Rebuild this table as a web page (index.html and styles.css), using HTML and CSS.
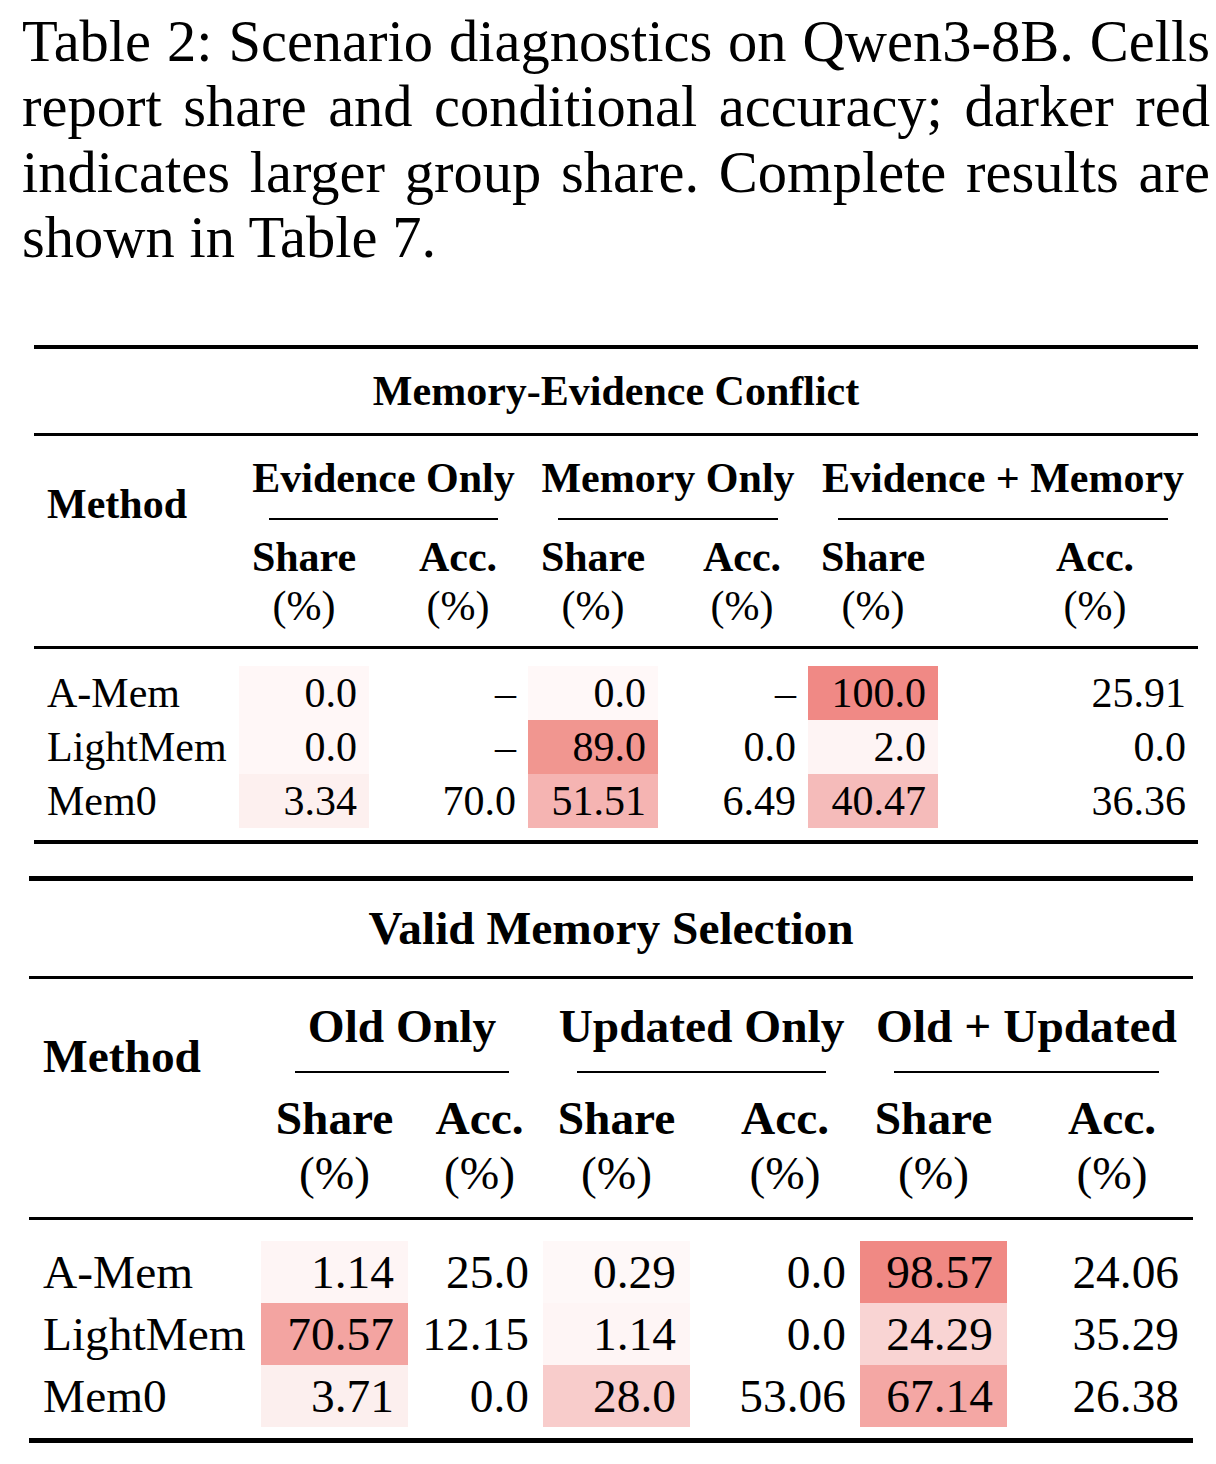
FILE: index.html
```html
<!DOCTYPE html>
<html lang="en">
<head>
<meta charset="utf-8">
<title>Table 2: Scenario diagnostics on Qwen3-8B</title>
<link rel="stylesheet" href="styles.css">
</head>
<body>
<main class="page">
  <p class="caption">
    <span class="cap-line">Table 2: Scenario diagnostics on Qwen3-8B. Cells</span>
    <span class="cap-line">report share and conditional accuracy; darker red</span>
    <span class="cap-line">indicates larger group share. Complete results are</span>
    <span class="cap-line last">shown in Table 7.</span>
  </p>

  <table class="t t1">
    <colgroup>
      <col class="w-method"><col class="w-share"><col class="w-acc1"><col class="w-share"><col class="w-acc2"><col class="w-share"><col class="w-acc3">
    </colgroup>
    <thead>
      <tr><th colspan="7" class="title">Memory-Evidence Conflict</th></tr>
      <tr>
        <th rowspan="2" class="method">Method</th>
        <th colspan="2" class="grp"><div class="grp-label">Evidence Only</div><div class="cmid"></div></th>
        <th colspan="2" class="grp"><div class="grp-label">Memory Only</div><div class="cmid"></div></th>
        <th colspan="2" class="grp"><div class="grp-label">Evidence + Memory</div><div class="cmid"></div></th>
      </tr>
      <tr>
        <th class="sub"><span class="sub-in"><b>Share</b><span class="pct">(%)</span></span></th>
        <th class="sub a1"><span class="sub-in"><b>Acc.</b><span class="pct">(%)</span></span></th>
        <th class="sub"><span class="sub-in"><b>Share</b><span class="pct">(%)</span></span></th>
        <th class="sub a2"><span class="sub-in"><b>Acc.</b><span class="pct">(%)</span></span></th>
        <th class="sub"><span class="sub-in"><b>Share</b><span class="pct">(%)</span></span></th>
        <th class="sub a3"><span class="sub-in"><b>Acc.</b><span class="pct">(%)</span></span></th>
      </tr>
    </thead>
    <tbody>
      <tr class="gap-top"><td colspan="7"></td></tr>
      <tr class="row">
        <td class="name">A-Mem</td>
        <td class="num" style="background:#FFF7F7">0.0</td>
        <td class="num">–</td>
        <td class="num" style="background:#FFF8F8">0.0</td>
        <td class="num">–</td>
        <td class="num" style="background:#F08985">100.0</td>
        <td class="num">25.91</td>
      </tr>
      <tr class="row">
        <td class="name">LightMem</td>
        <td class="num" style="background:#FFF7F7">0.0</td>
        <td class="num">–</td>
        <td class="num" style="background:#F19690">89.0</td>
        <td class="num">0.0</td>
        <td class="num" style="background:#FEF4F4">2.0</td>
        <td class="num">0.0</td>
      </tr>
      <tr class="row">
        <td class="name">Mem0</td>
        <td class="num" style="background:#FDF0EF">3.34</td>
        <td class="num">70.0</td>
        <td class="num" style="background:#F5B4B2">51.51</td>
        <td class="num">6.49</td>
        <td class="num" style="background:#F5BBBA">40.47</td>
        <td class="num">36.36</td>
      </tr>
      <tr class="gap-bot"><td colspan="7"></td></tr>
    </tbody>
  </table>

  <table class="t t2">
    <colgroup>
      <col class="w-method"><col class="w-share"><col class="w-acc1"><col class="w-share"><col class="w-acc2"><col class="w-share"><col class="w-acc3">
    </colgroup>
    <thead>
      <tr><th colspan="7" class="title">Valid Memory Selection</th></tr>
      <tr>
        <th rowspan="2" class="method">Method</th>
        <th colspan="2" class="grp"><div class="grp-label">Old Only</div><div class="cmid"></div></th>
        <th colspan="2" class="grp"><div class="grp-label">Updated Only</div><div class="cmid"></div></th>
        <th colspan="2" class="grp"><div class="grp-label">Old + Updated</div><div class="cmid"></div></th>
      </tr>
      <tr>
        <th class="sub"><span class="sub-in"><b>Share</b><span class="pct">(%)</span></span></th>
        <th class="sub a1"><span class="sub-in"><b>Acc.</b><span class="pct">(%)</span></span></th>
        <th class="sub"><span class="sub-in"><b>Share</b><span class="pct">(%)</span></span></th>
        <th class="sub a2"><span class="sub-in"><b>Acc.</b><span class="pct">(%)</span></span></th>
        <th class="sub"><span class="sub-in"><b>Share</b><span class="pct">(%)</span></span></th>
        <th class="sub a3"><span class="sub-in"><b>Acc.</b><span class="pct">(%)</span></span></th>
      </tr>
    </thead>
    <tbody>
      <tr class="gap-top"><td colspan="7"></td></tr>
      <tr class="row">
        <td class="name">A-Mem</td>
        <td class="num" style="background:#FEF5F5">1.14</td>
        <td class="num">25.0</td>
        <td class="num" style="background:#FEF8F8">0.29</td>
        <td class="num">0.0</td>
        <td class="num" style="background:#F08984">98.57</td>
        <td class="num">24.06</td>
      </tr>
      <tr class="row">
        <td class="name">LightMem</td>
        <td class="num" style="background:#F3A4A1">70.57</td>
        <td class="num">12.15</td>
        <td class="num" style="background:#FEF5F5">1.14</td>
        <td class="num">0.0</td>
        <td class="num" style="background:#F9D4D3">24.29</td>
        <td class="num">35.29</td>
      </tr>
      <tr class="row">
        <td class="name">Mem0</td>
        <td class="num" style="background:#FCEFEE">3.71</td>
        <td class="num">0.0</td>
        <td class="num" style="background:#F8CCCB">28.0</td>
        <td class="num">53.06</td>
        <td class="num" style="background:#F4A7A4">67.14</td>
        <td class="num">26.38</td>
      </tr>
      <tr class="gap-bot"><td colspan="7"></td></tr>
    </tbody>
  </table>
</main>
</body>
</html>
```

FILE: styles.css
```css
html, body {
  margin: 0;
  padding: 0;
  background: #ffffff;
  color: #000000;
  font-family: "Liberation Serif", "Times New Roman", serif;
}

.page {
  width: 1188px;
  padding: 9px 0 0 22px;
}

/* Caption */
.caption {
  margin: 0;
  font-size: 58.5px;
  line-height: 65.3px;
}
.cap-line {
  display: block;
  white-space: nowrap;
  text-align: justify;
  text-align-last: justify;
}
.cap-line.last {
  text-align: left;
  text-align-last: left;
}

/* Tables (shared) */
.t {
  border-collapse: separate;
  border-spacing: 0;
  table-layout: fixed;
  width: 1164px;
}
.t th, .t td {
  padding: 0;
  font-weight: normal;
}
.t .title {
  font-weight: bold;
  text-align: center;
  white-space: nowrap;
}
.t .method {
  font-weight: bold;
  text-align: left;
  vertical-align: top;
}
.t .grp {
  font-weight: bold;
  text-align: center;
  vertical-align: top;
  white-space: nowrap;
}
.t .cmid {
  background: #000;
  height: 2px;
}
.t .sub {
  text-align: center;
  vertical-align: top;
  white-space: nowrap;
}
.t .sub-in {
  display: inline-block;
  text-align: center;
}
.t .sub-in b {
  display: block;
  font-weight: bold;
}
.t .pct {
  display: block;
}
.t .name {
  text-align: left;
  white-space: nowrap;
}
.t .num {
  text-align: right;
  white-space: nowrap;
}
.t .gap-top td, .t .gap-bot td {
  padding: 0;
}

/* Table 1 */
.t1 {
  margin: 75px 0 0 12px;
  font-size: 42px;
  border-top: 4px solid #000;
  border-bottom: 4px solid #000;
}
.t1 .w-method { width: 205px; }
.t1 .w-share { width: 130px; }
.t1 .w-acc1 { width: 159px; }
.t1 .w-acc2 { width: 150px; }
.t1 .w-acc3 { width: 260px; }
.t1 .title {
  line-height: 84px;
  border-bottom: 3px solid #000;
}
.t1 .method {
  padding: 44px 0 0 13px;
  line-height: 48px;
  border-bottom: 3px solid #000;
}
.t1 .grp { padding-top: 18px; }
.t1 .grp-label { line-height: 48px; }
.t1 .cmid { margin: 16px 30px 0 30px; }
.t1 .sub {
  padding: 13px 0 15px 0;
  line-height: 49px;
  border-bottom: 3px solid #000;
}
.t1 .sub.a1 { padding-left: 19px; }
.t1 .sub.a2 { padding-left: 18px; }
.t1 .sub.a3 { padding-left: 54px; }
.t1 .row td { line-height: 54px; }
.t1 .name { padding-left: 13px; }
.t1 .num { padding-right: 12px; }
.t1 .gap-top td { height: 17px; }
.t1 .gap-bot td { height: 12px; }

/* Table 2 */
.t2 {
  margin: 32px 0 0 7px;
  font-size: 47.4px;
  border-top: 5px solid #000;
  border-bottom: 5px solid #000;
}
.t2 .w-method { width: 232px; }
.t2 .w-share { width: 147px; }
.t2 .w-acc1 { width: 135px; }
.t2 .w-acc2 { width: 170px; }
.t2 .w-acc3 { width: 186px; }
.t2 .title {
  line-height: 95px;
  border-bottom: 3px solid #000;
}
.t2 .method {
  padding: 50px 0 0 14px;
  line-height: 54px;
  border-bottom: 3px solid #000;
}
.t2 .grp { padding-top: 20px; }
.t2 .grp-label { line-height: 54px; }
.t2 .cmid { margin: 18px 34px 0 34px; }
.t2 .sub {
  padding: 18px 0 16px 0;
  line-height: 55px;
  border-bottom: 3px solid #000;
}
.t2 .sub.a1 { padding-left: 8px; }
.t2 .sub.a2 { padding-left: 20px; }
.t2 .sub.a3 { padding-left: 24px; }
.t2 .row td { line-height: 62px; }
.t2 .name { padding-left: 14px; }
.t2 .num { padding-right: 14px; }
.t2 .gap-top td { height: 21px; }
.t2 .gap-bot td { height: 11px; }
```
